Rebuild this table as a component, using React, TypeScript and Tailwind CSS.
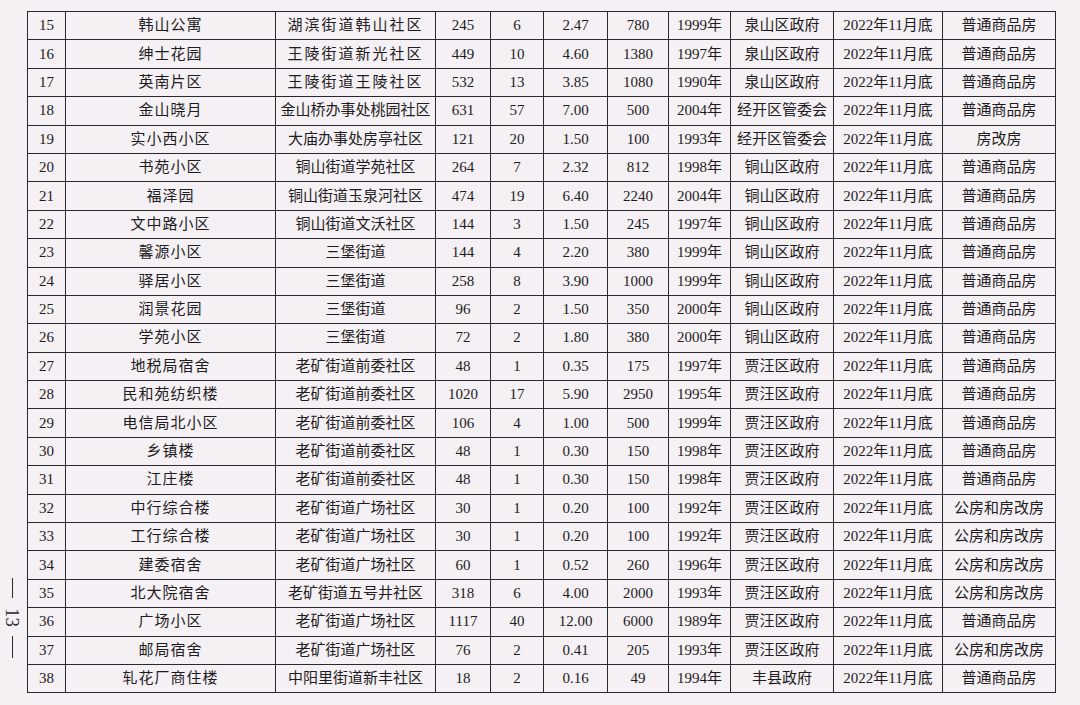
import React from "react";

type Row = [string, string, string, string, string, string, string, string, string, string, string];

const rows: Row[] = [
  ["15", "韩山公寓", "湖滨街道韩山社区", "245", "6", "2.47", "780", "1999年", "泉山区政府", "2022年11月底", "普通商品房"],
  ["16", "绅士花园", "王陵街道新光社区", "449", "10", "4.60", "1380", "1997年", "泉山区政府", "2022年11月底", "普通商品房"],
  ["17", "英南片区", "王陵街道王陵社区", "532", "13", "3.85", "1080", "1990年", "泉山区政府", "2022年11月底", "普通商品房"],
  ["18", "金山晓月", "金山桥办事处桃园社区", "631", "57", "7.00", "500", "2004年", "经开区管委会", "2022年11月底", "普通商品房"],
  ["19", "实小西小区", "大庙办事处房亭社区", "121", "20", "1.50", "100", "1993年", "经开区管委会", "2022年11月底", "房改房"],
  ["20", "书苑小区", "铜山街道学苑社区", "264", "7", "2.32", "812", "1998年", "铜山区政府", "2022年11月底", "普通商品房"],
  ["21", "福泽园", "铜山街道玉泉河社区", "474", "19", "6.40", "2240", "2004年", "铜山区政府", "2022年11月底", "普通商品房"],
  ["22", "文中路小区", "铜山街道文沃社区", "144", "3", "1.50", "245", "1997年", "铜山区政府", "2022年11月底", "普通商品房"],
  ["23", "馨源小区", "三堡街道", "144", "4", "2.20", "380", "1999年", "铜山区政府", "2022年11月底", "普通商品房"],
  ["24", "驿居小区", "三堡街道", "258", "8", "3.90", "1000", "1999年", "铜山区政府", "2022年11月底", "普通商品房"],
  ["25", "润景花园", "三堡街道", "96", "2", "1.50", "350", "2000年", "铜山区政府", "2022年11月底", "普通商品房"],
  ["26", "学苑小区", "三堡街道", "72", "2", "1.80", "380", "2000年", "铜山区政府", "2022年11月底", "普通商品房"],
  ["27", "地税局宿舍", "老矿街道前委社区", "48", "1", "0.35", "175", "1997年", "贾汪区政府", "2022年11月底", "普通商品房"],
  ["28", "民和苑纺织楼", "老矿街道前委社区", "1020", "17", "5.90", "2950", "1995年", "贾汪区政府", "2022年11月底", "普通商品房"],
  ["29", "电信局北小区", "老矿街道前委社区", "106", "4", "1.00", "500", "1999年", "贾汪区政府", "2022年11月底", "普通商品房"],
  ["30", "乡镇楼", "老矿街道前委社区", "48", "1", "0.30", "150", "1998年", "贾汪区政府", "2022年11月底", "普通商品房"],
  ["31", "江庄楼", "老矿街道前委社区", "48", "1", "0.30", "150", "1998年", "贾汪区政府", "2022年11月底", "普通商品房"],
  ["32", "中行综合楼", "老矿街道广场社区", "30", "1", "0.20", "100", "1992年", "贾汪区政府", "2022年11月底", "公房和房改房"],
  ["33", "工行综合楼", "老矿街道广场社区", "30", "1", "0.20", "100", "1992年", "贾汪区政府", "2022年11月底", "公房和房改房"],
  ["34", "建委宿舍", "老矿街道广场社区", "60", "1", "0.52", "260", "1996年", "贾汪区政府", "2022年11月底", "公房和房改房"],
  ["35", "北大院宿舍", "老矿街道五号井社区", "318", "6", "4.00", "2000", "1993年", "贾汪区政府", "2022年11月底", "公房和房改房"],
  ["36", "广场小区", "老矿街道广场社区", "1117", "40", "12.00", "6000", "1989年", "贾汪区政府", "2022年11月底", "普通商品房"],
  ["37", "邮局宿舍", "老矿街道广场社区", "76", "2", "0.41", "205", "1993年", "贾汪区政府", "2022年11月底", "公房和房改房"],
  ["38", "轧花厂商住楼", "中阳里街道新丰社区", "18", "2", "0.16", "49", "1994年", "丰县政府", "2022年11月底", "普通商品房"],
];

const widths = ["w-[38px]", "w-[210px]", "w-[160px]", "w-[55px]", "w-[53px]", "w-[64px]", "w-[61px]", "w-[62px]", "w-[103px]", "w-[109px]", "w-[113px]"];

// rows whose street column is printed a bit spaced out
const spaced = new Set(["15", "16", "17"]);

export default function App() {
  return (
    <div
      className="w-[1080px] h-[705px] overflow-hidden bg-[#f4f0f4] text-[#1e1c22] flex"
      style={{ fontFamily: '"Liberation Serif", "Noto Sans CJK SC", serif' }}
    >
      <div className="w-[27px] shrink-0 flex flex-col items-center pt-[578px] pr-[2px] gap-[6px]">
        <div className="w-[1.5px] h-[20px] bg-[#2a2830]" />
        <div className="h-[26px] flex items-center justify-center">
          <span className="rotate-90 text-[19px] leading-none text-[#2a2830]">13</span>
        </div>
        <div className="w-[1.5px] h-[22px] bg-[#2a2830]" />
      </div>
      <div className="pt-[11px]">
        <table className="table-fixed border-collapse w-[1028px] border-[1.5px] border-[#2b2930]">
          <colgroup>
            {widths.map((w, i) => (
              <col key={i} className={w} />
            ))}
          </colgroup>
          <tbody>
            {rows.map((r) => (
              <tr key={r[0]} className="h-[28.4px]">
                {r.map((c, i) => (
                  <td
                    key={i}
                    className={
                      "border-[1.5px] border-[#2b2930] text-center p-0 text-[15px] leading-none whitespace-nowrap " +
                      (i === 1 ? "tracking-[1px] " : "") +
                      (i === 2 && spaced.has(r[0]) ? "tracking-[2px] " : "")
                    }
                  >
                    {c}
                  </td>
                ))}
              </tr>
            ))}
          </tbody>
        </table>
      </div>
    </div>
  );
}
